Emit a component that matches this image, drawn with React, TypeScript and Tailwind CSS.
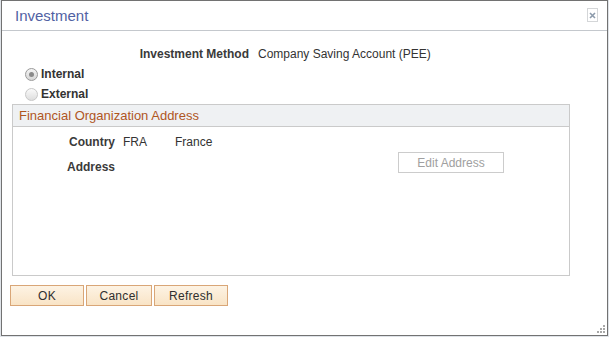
import React from 'react'

const Radio: React.FC<{ checked?: boolean }> = ({ checked }) => (
  <span
    className={`flex items-center justify-center w-[13px] h-[13px] rounded-full border ${
      checked
        ? 'border-[#9a9a9a] bg-gradient-to-b from-[#f4f4f4] to-[#d6d6d6]'
        : 'border-[#c8c8c8] bg-gradient-to-b from-[#fafafa] to-[#dedede]'
    }`}
  >
    {checked && <span className="w-[5px] h-[5px] rounded-full bg-[#8a8a8a]" />}
  </span>
)

const ActionButton: React.FC<{ label: string; width: string }> = ({ label, width }) => (
  <button
    className={`${width} h-[21px] border border-[#d9a677] bg-gradient-to-b from-[#fdf3e4] to-[#f9e4c6] text-[12px] text-[#2f2f2f] leading-none tracking-[0.3px]`}
  >
    {label}
  </button>
)

export default function App() {
  return (
    <div className="w-[609px] h-[337px] bg-[#dfe3e8] font-['Liberation_Sans',Arial,sans-serif]">
      <div className="relative ml-px w-[607px] h-[336px] border border-[#727272] bg-white flex flex-col">
        {/* title bar */}
        <div className="h-[30px] border-b border-[#c4c8cd] flex items-center justify-between pl-[13px] pr-[9px] shrink-0">
          <span className="text-[15px] text-[#5161a3] leading-none">Investment</span>
          <span className="w-[11px] h-[14px] border border-[#d4d6d8] flex items-center justify-center mb-[1px]">
            <svg width="7" height="7" viewBox="0 0 7 7">
              <path d="M1 1L6 6M6 1L1 6" stroke="#8c9aab" strokeWidth="1.6" />
            </svg>
          </span>
        </div>

        {/* investment method */}
        <div className="flex items-center mt-[16px] h-[14px] text-[12px] leading-[14px]">
          <span className="w-[247px] text-right font-bold text-[#3a3a3a]">Investment Method</span>
          <span className="ml-[9px] text-[#333]">Company Saving Account (PEE)</span>
        </div>

        {/* radios */}
        <div className="mt-[3px] pl-[23px] flex flex-col text-[12px] leading-[14px] font-bold text-[#333]">
          <div className="flex items-center h-[20px] gap-[3px]">
            <Radio checked />
            <span>Internal</span>
          </div>
          <div className="flex items-center h-[20px] gap-[3px]">
            <Radio />
            <span>External</span>
          </div>
        </div>

        {/* group box */}
        <div className="ml-[10px] w-[558px] h-[172px] border border-[#cacaca] flex flex-col">
          <div className="h-[22px] bg-[#eff1f3] border-b border-[#cacaca] flex items-center pl-[6px] shrink-0">
            <span className="text-[13px] text-[#b0561f] leading-none">Financial Organization Address</span>
          </div>
          <div className="flex flex-col text-[12px] leading-[14px]">
            <div className="flex mt-[8px]">
              <span className="w-[102px] text-right font-bold text-[#3a3a3a]">Country</span>
              <span className="ml-[8px] w-[52px] text-[#333]">FRA</span>
              <span className="text-[#333]">France</span>
            </div>
            <div className="flex items-start mt-[3px]">
              <span className="w-[102px] mt-[8px] text-right font-bold text-[#3a3a3a]">Address</span>
              <button className="ml-[283px] w-[106px] h-[21px] border border-[#cccccc] bg-white text-[12px] text-[#a0a0a0] leading-none">
                Edit Address
              </button>
            </div>
          </div>
        </div>

        {/* buttons */}
        <div className="flex gap-[2px] ml-[8px] mt-[9px]">
          <ActionButton label="OK" width="w-[74px]" />
          <ActionButton label="Cancel" width="w-[66px]" />
          <ActionButton label="Refresh" width="w-[74px]" />
        </div>

        {/* resize grip */}
        <svg className="absolute right-[1px] bottom-[1px]" width="10" height="10" viewBox="0 0 10 10">
          <rect x="7" y="1" width="2" height="2" fill="#a8a8a8" />
          <rect x="4" y="4" width="2" height="2" fill="#a8a8a8" />
          <rect x="7" y="4" width="2" height="2" fill="#a8a8a8" />
          <rect x="1" y="7" width="2" height="2" fill="#a8a8a8" />
          <rect x="4" y="7" width="2" height="2" fill="#a8a8a8" />
          <rect x="7" y="7" width="2" height="2" fill="#a8a8a8" />
        </svg>
      </div>
    </div>
  )
}
